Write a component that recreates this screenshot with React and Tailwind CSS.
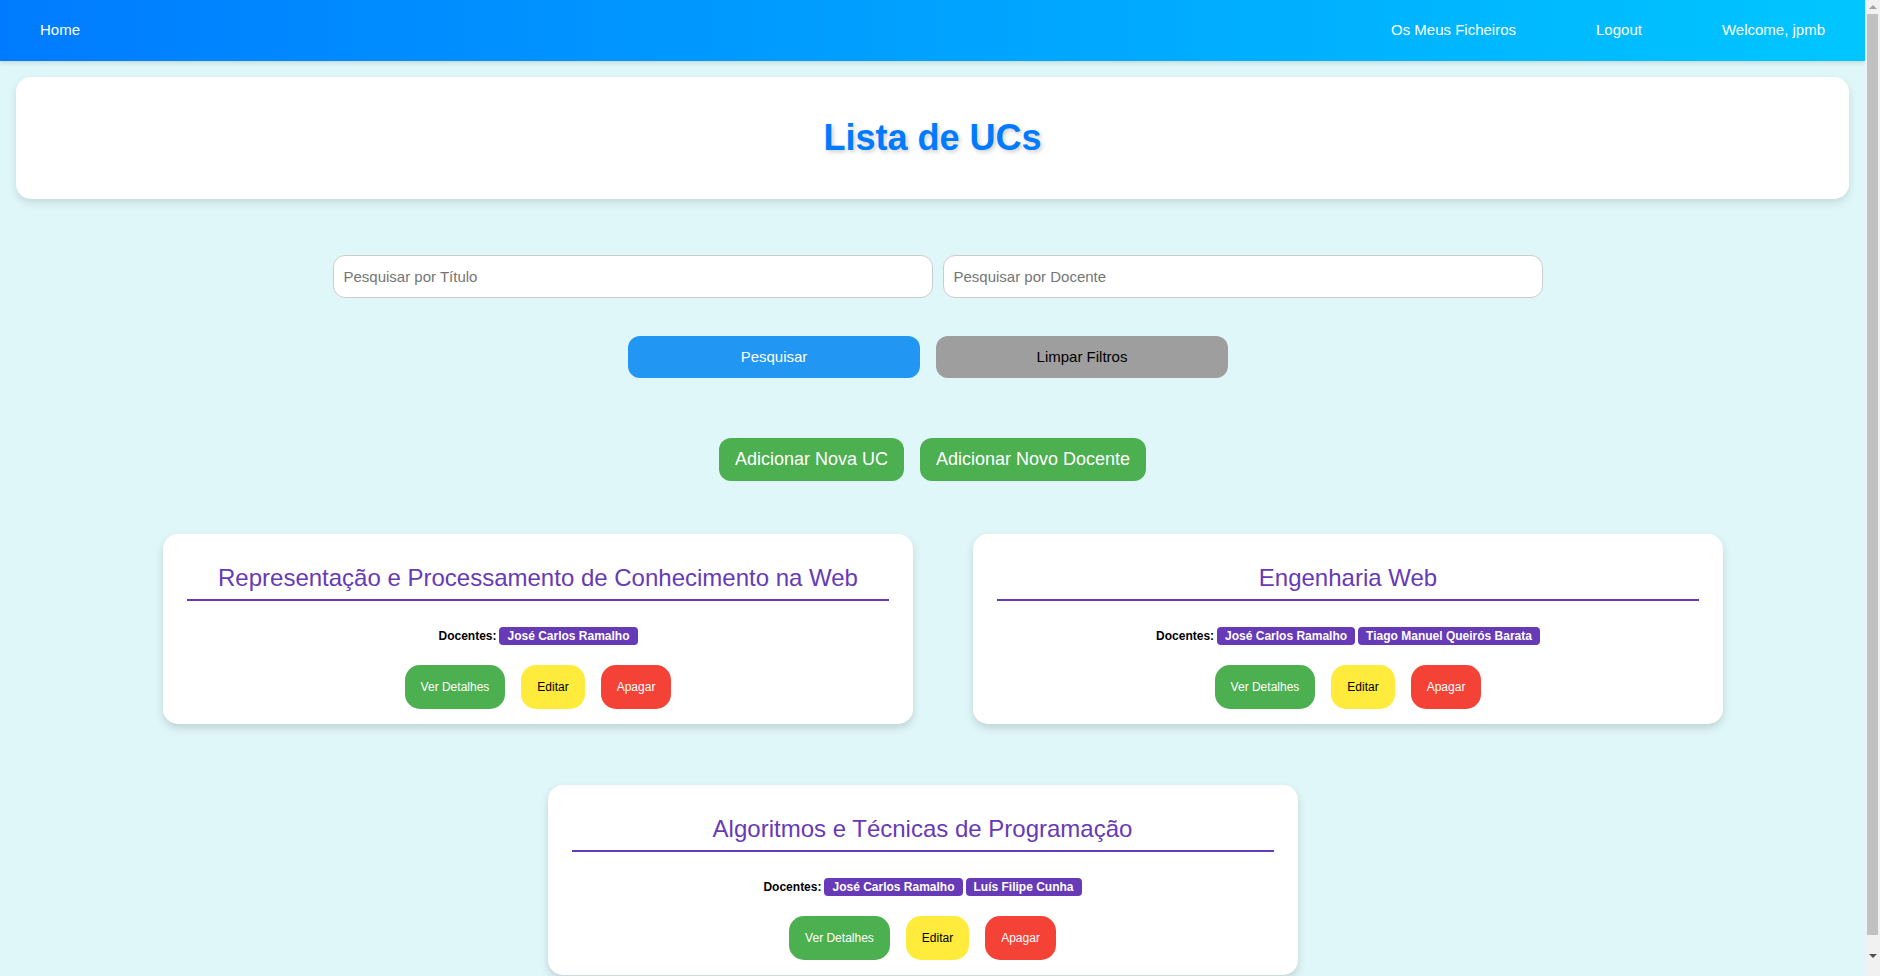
import React from 'react';

const ucs = [
  {
    id: 1,
    titulo: 'Representação e Processamento de Conhecimento na Web',
    docentes: ['José Carlos Ramalho']
  },
  {
    id: 2,
    titulo: 'Engenharia Web',
    docentes: ['José Carlos Ramalho', 'Tiago Manuel Queirós Barata']
  },
  {
    id: 3,
    titulo: 'Algoritmos e Técnicas de Programação',
    docentes: ['José Carlos Ramalho', 'Luís Filipe Cunha']
  }
];

const Navbar = () => (
  <nav className="flex h-[61px] items-center justify-between bg-linear-to-r from-[#007bff] to-[#00c6ff] text-[15px] text-white shadow-[0_2px_4px_rgba(0,0,0,0.12)]">
    <a className="px-10">Home</a>
    <div className="flex items-center">
      <a className="px-10">Os Meus Ficheiros</a>
      <a className="px-10">Logout</a>
      <span className="px-10">Welcome, jpmb</span>
    </div>
  </nav>
);

const UcCard = ({ uc, className = '' }) => (
  <div className={`w-[750px] rounded-[15px] bg-white px-6 pt-[30px] pb-[15px] shadow-[0_4px_8px_rgba(0,0,0,0.15)] ${className}`}>
    {/* Título */}
    <h2 className="border-b-2 border-[#673ab7] pb-2 text-center text-[24px] leading-[27px] text-[#673ab7]">
      {uc.titulo}
    </h2>

    {/* Docentes */}
    <div className="mt-[26px] flex h-[18px] items-center justify-center gap-[3px] text-[12px] font-bold">
      <span className="text-black">Docentes:</span>
      {uc.docentes.map((d) => (
        <span key={d} className="rounded-[4px] bg-[#673ab7] px-2 leading-[18px] text-white">
          {d}
        </span>
      ))}
    </div>

    {/* Ações */}
    <div className="mt-5 flex justify-center gap-4 text-[12px]">
      <button className="h-[44px] rounded-[15px] bg-[#4caf50] px-4 text-white">Ver Detalhes</button>
      <button className="h-[44px] rounded-[15px] bg-[#ffeb3b] px-4 text-black">Editar</button>
      <button className="h-[44px] rounded-[15px] bg-[#f44336] px-4 text-white">Apagar</button>
    </div>
  </div>
);

// barra de scroll da janela (a página é um pouco mais alta que o ecrã)
const ScrollBar = () => (
  <div className="sticky top-0 flex h-screen w-[15px] shrink-0 flex-col bg-[#f1f1f1]">
    <div className="flex h-[14px] items-center justify-center">
      <div className="h-0 w-0 border-x-[4px] border-b-[4px] border-x-transparent border-b-[#a3a3a3]" />
    </div>
    <div className="mx-[2px] h-[921px] bg-[#c1c1c1]" />
    <div className="flex flex-1 items-center justify-center">
      <div className="h-0 w-0 border-x-[4px] border-t-[4px] border-x-transparent border-t-[#505050]" />
    </div>
  </div>
);

export default function App() {
  return (
    <div className="flex items-start bg-[#e0f7fa] font-['Liberation_Sans',Arial,sans-serif]">
      <div className="min-w-0 flex-1 pb-[30px]">
        <Navbar />

        {/* Header */}
        <div className="mx-4 mt-4 rounded-[15px] bg-white p-10 text-center shadow-[0_4px_8px_rgba(0,0,0,0.12)]">
          <h1 className="text-[36px] leading-[42px] font-bold text-[#007bff] [text-shadow:2px_2px_4px_rgba(0,0,0,0.2)]">
            Lista de UCs
          </h1>
        </div>

        {/* Filtros */}
        <div className="mt-[56px] flex justify-center gap-[10px] pl-[10px]">
          <input
            type="text"
            placeholder="Pesquisar por Título"
            className="h-[43px] w-[600px] rounded-xl border border-[#ccc] bg-white px-[10px] text-[15px] placeholder:text-[#757575] focus:outline-none"
          />
          <input
            type="text"
            placeholder="Pesquisar por Docente"
            className="h-[43px] w-[600px] rounded-xl border border-[#ccc] bg-white px-[10px] text-[15px] placeholder:text-[#757575] focus:outline-none"
          />
        </div>

        <div className="mt-[38px] flex justify-center gap-4 pr-[9px] text-[15px]">
          <button className="h-[42px] w-[292px] rounded-xl bg-[#2196f3] text-white">Pesquisar</button>
          <button className="h-[42px] w-[292px] rounded-xl bg-[#9e9e9e] text-black">Limpar Filtros</button>
        </div>

        <div className="mt-[60px] flex justify-center gap-4 text-[18px] text-white">
          <button className="h-[43px] rounded-xl bg-[#4caf50] px-4">Adicionar Nova UC</button>
          <button className="h-[43px] rounded-xl bg-[#4caf50] px-4">Adicionar Novo Docente</button>
        </div>

        {/* Lista */}
        <div className="mt-[53px] flex flex-wrap justify-center gap-x-[60px] gap-y-[61px] pl-[21px]">
          {ucs.map((uc, i) => (
            <UcCard key={uc.id} uc={uc} className={i === 2 ? 'mr-[41px]' : ''} />
          ))}
        </div>
      </div>
      <ScrollBar />
    </div>
  );
}
